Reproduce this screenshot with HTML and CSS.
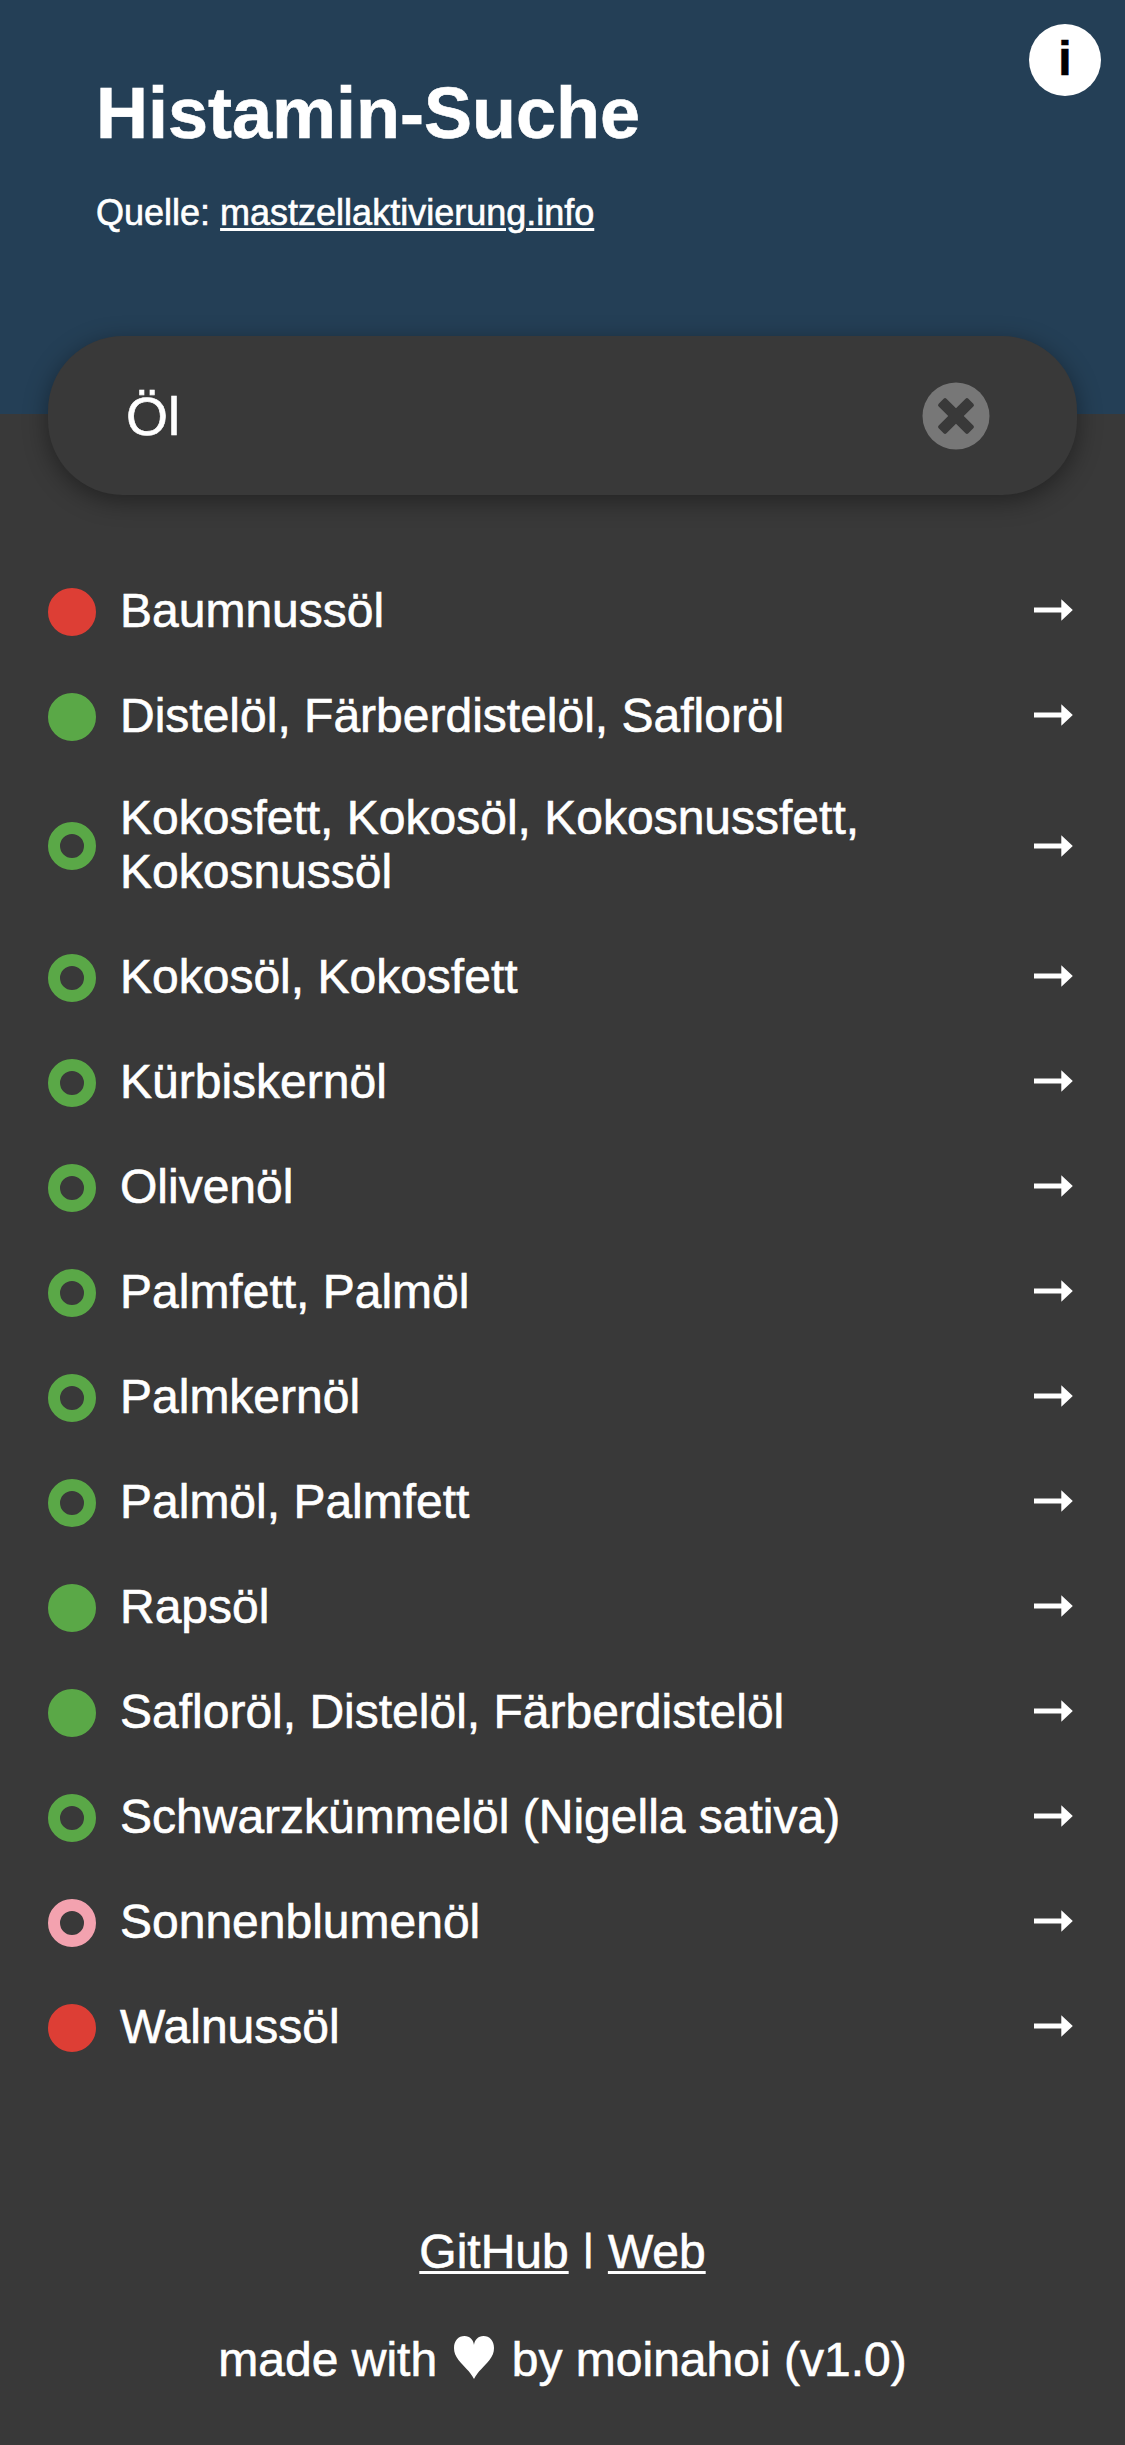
FILE: index.html
```html
<!DOCTYPE html>
<html lang="de">
<head>
<meta charset="utf-8">
<title>Histamin-Suche</title>
<link rel="stylesheet" href="styles.css">
</head>
<body>
<svg class="sprite" aria-hidden="true">
  <symbol id="arrow" viewBox="0 0 39 22"><path d="M0 8.5H27.3V.3L38.8 11 27.3 21.7V13.5H0Z"/></symbol>
</svg>
<header class="header">
  <div class="heading">
    <h1 class="title">Histamin-Suche</h1>
    <p class="source">Quelle: <a href="#">mastzellaktivierung.info</a></p>
  </div>
  <button class="info" type="button">i</button>
</header>
<main>
  <div class="search">
    <span class="query">Öl</span>
    <svg class="clear" viewBox="0 0 68 68"><circle cx="34" cy="34" r="33.5" fill="#777"/><g fill="#393939" transform="rotate(45 34 34)"><rect x="13" y="28.500" width="42" height="11" rx="2"/><rect x="28.500" y="13" width="11" height="42" rx="2"/></g></svg>
  </div>
  <ul class="results">
    <li class="entry"><i class="dot red"></i><span class="name">Baumnussöl</span><svg class="arrow"><use href="#arrow"/></svg></li>
    <li class="entry"><i class="dot green"></i><span class="name">Distelöl, Färberdistelöl, Safloröl</span><svg class="arrow"><use href="#arrow"/></svg></li>
    <li class="entry tall"><i class="dot ring green"></i><span class="name">Kokosfett, Kokosöl, Kokosnussfett, Kokosnussöl</span><svg class="arrow"><use href="#arrow"/></svg></li>
    <li class="entry"><i class="dot ring green"></i><span class="name">Kokosöl, Kokosfett</span><svg class="arrow"><use href="#arrow"/></svg></li>
    <li class="entry"><i class="dot ring green"></i><span class="name">Kürbiskernöl</span><svg class="arrow"><use href="#arrow"/></svg></li>
    <li class="entry"><i class="dot ring green"></i><span class="name">Olivenöl</span><svg class="arrow"><use href="#arrow"/></svg></li>
    <li class="entry"><i class="dot ring green"></i><span class="name">Palmfett, Palmöl</span><svg class="arrow"><use href="#arrow"/></svg></li>
    <li class="entry"><i class="dot ring green"></i><span class="name">Palmkernöl</span><svg class="arrow"><use href="#arrow"/></svg></li>
    <li class="entry"><i class="dot ring green"></i><span class="name">Palmöl, Palmfett</span><svg class="arrow"><use href="#arrow"/></svg></li>
    <li class="entry"><i class="dot green"></i><span class="name">Rapsöl</span><svg class="arrow"><use href="#arrow"/></svg></li>
    <li class="entry"><i class="dot green"></i><span class="name">Safloröl, Distelöl, Färberdistelöl</span><svg class="arrow"><use href="#arrow"/></svg></li>
    <li class="entry"><i class="dot ring green"></i><span class="name">Schwarzkümmelöl (Nigella sativa)</span><svg class="arrow"><use href="#arrow"/></svg></li>
    <li class="entry"><i class="dot ring pink"></i><span class="name">Sonnenblumenöl</span><svg class="arrow"><use href="#arrow"/></svg></li>
    <li class="entry"><i class="dot red"></i><span class="name">Walnussöl</span><svg class="arrow"><use href="#arrow"/></svg></li>
  </ul>
</main>
<footer class="footer">
  <p><a href="#">GitHub</a> <span class="divider">|</span> <a href="#">Web</a></p>
  <p>made with <svg class="heart" viewBox="0 0 40 43"><path d="M20 43C16 35 10 31 4.500 24 1.500 20 0 16.500 0 12 0 4.500 4.500 0 10.500 0 16 0 19.500 4 20 9 20.500 4 24 0 29.500 0 35.500 0 40 4.500 40 12 40 16.500 38.500 20 35.500 24 30 31 24 35 20 43Z"/></svg> by moinahoi (v1.0)</p>
</footer>
</body>
</html>
```

FILE: styles.css
```css
* { box-sizing: border-box; }

body {
  margin: 0;
  background: #393939;
  color: #fff;
  font: 48px/54px "Liberation Sans", Arial, Helvetica, sans-serif;
  -webkit-text-stroke: .6px;
}

a {
  color: inherit;
  text-decoration-thickness: 3px;
  text-underline-offset: 3px;
}

.sprite { display: none; }

.header {
  display: flex;
  justify-content: space-between;
  height: 414px;
  padding: 24px 24px 0 96px;
  background: #243f56;
}

.title {
  margin: 48px 0 0;
  font-size: 72px;
  line-height: 82px;
}

.source {
  margin: 38px 0 0;
  font-size: 36px;
  line-height: 42px;
}

.info {
  width: 72px;
  height: 72px;
  padding: 0 0 3px;
  border: 0;
  border-radius: 50%;
  background: #fff;
  color: #000;
  font: bold 48px/69px "Liberation Sans", Arial, sans-serif;
}

.search {
  display: flex;
  align-items: center;
  justify-content: space-between;
  height: 159px;
  margin: -78px 48px 0;
  padding: 0 87px 0 78px;
  border-radius: 75px;
  background: #393939;
  box-shadow: 0 6px 24px rgba(0, 0, 0, .4);
}

.query {
  font-size: 54px;
  line-height: 62px;
}

.clear {
  width: 68px;
  height: 68px;
}

.results {
  display: flex;
  flex-direction: column;
  gap: 48px;
  margin: 87px 48px 0;
  padding: 0;
  list-style: none;
}

.entry {
  display: flex;
  align-items: center;
  padding-top: 3px;
}

.tall { padding-top: 0; }

.dot {
  flex: none;
  width: 48px;
  height: 48px;
  border: 24px solid;
  border-radius: 50%;
}

.ring { border-width: 12px; }
.red { border-color: #dd3e35; }
.green { border-color: #5aa847; }
.pink { border-color: #f3a2af; }

.name {
  width: 820px;
  margin: -1px 0 0 24px;
  padding-bottom: 1px;
}

.arrow {
  width: 39px;
  height: 22px;
  margin: 0 4px 5px auto;
  fill: currentColor;
}

.tall .arrow { margin-bottom: 0; }

.footer {
  padding-top: 170px;
  text-align: center;
}

.footer p { margin: 0 0 54px; }

/* Bar at cap height, set in the width of a regular "|" */
.divider {
  display: inline-block;
  width: 12.5px;
  font-size: 37px;
  line-height: 1;
  vertical-align: 8px;
  -webkit-text-stroke: 1.2px;
}

.heart {
  width: 40px;
  height: 43px;
  margin: 0 4px;
  vertical-align: -3px;
  fill: currentColor;
}
```
